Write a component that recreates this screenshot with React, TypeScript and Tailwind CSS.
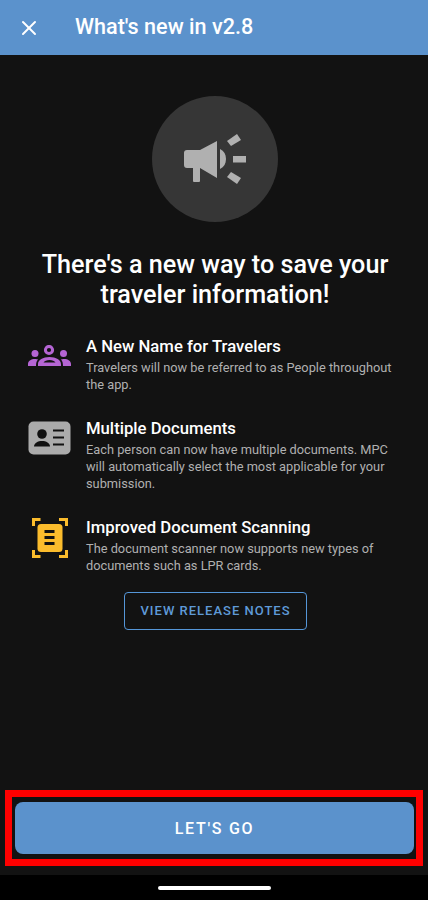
import { X } from "lucide-react";

const MegaphoneIcon = () => (
  <svg width="64" height="50" viewBox="0 0 64 50" fill="#b0b0b0">
    <path d="M4 16h13L34 7v37L17 34v13q0 1-1 1h-5q-1 0-1-1V34H4q-3 0-3-3V19q0-3 3-3z" />
    <path d="M37 15c4 2 6 5.500 6 10s-2 8-6 10z" />
    <rect x="50" y="22" width="13" height="6.500" />
    <path d="M44 7l10-7 4 6-10 6z" />
    <path d="M44 43l4-5 10 6-4 6z" />
  </svg>
);

const PeopleIcon = () => (
  <svg width="43" height="21" viewBox="0 0 43 21" fill="#b565d4">
    <circle cx="21" cy="5" r="3.600" fill="none" stroke="#b565d4" strokeWidth="3" />
    <circle cx="7" cy="8.500" r="3.500" />
    <circle cx="35.500" cy="8.500" r="3.500" />
    <path d="M8 21H0v-2c0-3 3-5 7-5 1.500 0 2 .2 3 .5-1.500 1.500-2 3.500-2 6.500z" />
    <path d="M35 21h8v-2c0-3-3-5-7-5-1.500 0-2 .2-3 .5 1.500 1.500 2 3.500 2 6.500z" />
    <path d="M10 21v-2c0-4 5-7 11.500-7S33 15 33 19v2zM15.500 17.500h12c-1-1.500-3.200-2.500-6-2.500s-5 1-6 2.500z" fillRule="evenodd" />
  </svg>
);

const IdCardIcon = () => (
  <svg width="43" height="34" viewBox="0 0 43 34">
    <rect x="0.500" y="0.500" width="42" height="33" rx="5" fill="#ababab" />
    <circle cx="14" cy="13" r="4.800" fill="#111" />
    <path d="M6 25.500c0-3.500 4-5.500 8-5.500s8 2 8 5.500z" fill="#111" />
    <rect x="25" y="8.500" width="11" height="2" fill="#111" />
    <rect x="25" y="15.500" width="11" height="2" fill="#111" />
    <rect x="25" y="22.500" width="11" height="2" fill="#111" />
  </svg>
);

const ScanIcon = () => (
  <svg width="36" height="40" viewBox="0 0 36 40" fill="none">
    <g stroke="#fbbc2c" strokeWidth="3">
      <path d="M1.500 8V1.500h7" />
      <path d="M27 1.500h7.500V8" />
      <path d="M1.500 32v6.500h7" />
      <path d="M27 38.500h7.500V32" />
    </g>
    <rect x="5.500" y="6" width="25" height="28" rx="3.500" fill="#fbbc2c" />
    <rect x="12.500" y="12" width="10" height="3" fill="#111" />
    <rect x="12.500" y="18" width="10" height="3" fill="#111" />
    <rect x="12.500" y="24" width="10" height="3" fill="#111" />
  </svg>
);

const features = [
  {
    icon: <PeopleIcon />,
    title: "A New Name for Travelers",
    text: "Travelers will now be referred to as People throughout the app.",
    rowClass: "h-[82px]",
    iconClass: "pt-[10px]",
  },
  {
    icon: <IdCardIcon />,
    title: "Multiple Documents",
    text: "Each person can now have multiple documents. MPC will automatically select the most applicable for your submission.",
    rowClass: "h-[99px]",
    iconClass: "pt-[4px]",
  },
  {
    icon: <ScanIcon />,
    title: "Improved Document Scanning",
    text: "The document scanner now supports new types of documents such as LPR cards.",
    rowClass: "h-[64px]",
    iconClass: "pl-[4px] pt-[2px]",
  },
];

export default function App() {
  return (
    <div className="relative flex h-[900px] w-[428px] flex-col overflow-hidden bg-[#121212] font-['Roboto',sans-serif]">
      <div className="flex h-[55px] shrink-0 items-center bg-[#5b92cc] pl-[17px] text-white">
        <X size={24} strokeWidth={2} />
        <span className="ml-[34px] text-[21.600px] font-medium">What's new in v2.8</span>
      </div>

      <div className="flex flex-1 flex-col items-center pt-[41px] pl-[2px]">
        <div className="flex h-[126px] w-[126px] items-center justify-center rounded-full bg-[#363636]">
          <MegaphoneIcon />
        </div>

        <h1 className="mt-[28px] w-[380px] text-center text-[25.200px] leading-[30px] font-medium text-white">
          There's a new way to save your traveler information!
        </h1>

        <div className="mt-[25px] flex w-full flex-col pl-[26px] pr-[30px]">
          {features.map((f) => (
            <div key={f.title} className={`flex ${f.rowClass}`}>
              <div className={`w-[58px] shrink-0 ${f.iconClass}`}>{f.icon}</div>
              <div>
                <div className="text-[16.700px] leading-[24px] font-medium text-white">{f.title}</div>
                <p className="text-[12.800px] leading-[17px] text-[#b0b0b0]">{f.text}</p>
              </div>
            </div>
          ))}
        </div>

        <button className="mt-[12px] flex h-[38px] w-[183px] items-center justify-center rounded border border-[#5596d8] pl-[1px] text-[13px] font-medium tracking-[1px] text-[#5f9ad8]">
          VIEW RELEASE NOTES
        </button>
      </div>

      <div className="pl-[15px] pr-[14px] pb-[21px]">
        <button className="flex h-[52px] w-full items-center justify-center rounded-lg bg-[#5b92cc] pt-[1px] text-[16px] font-medium tracking-[1.700px] text-white">
          LET'S GO
        </button>
      </div>

      <div className="flex h-[25px] shrink-0 items-center justify-center bg-black">
        <div className="h-[4px] w-[113px] rounded-full bg-white" />
      </div>

      {/* annotation over the primary button */}
      <div className="pointer-events-none absolute top-[790px] left-[5px] h-[76px] w-[418px] border-[7px] border-[#ff0000]" />
    </div>
  );
}
